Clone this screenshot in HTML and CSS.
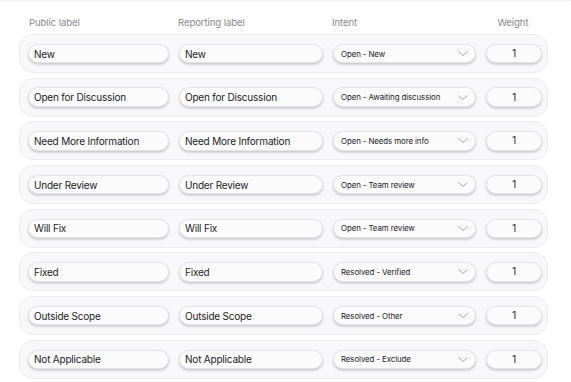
FILE: index.html
```html
<!DOCTYPE html>
<html lang="en">
<head>
    <meta charset="UTF-8">
    <meta name="viewport" content="width=device-width, initial-scale=1.0">
    <title>Status labels</title>
    <link rel="stylesheet" href="styles.css">
</head>
<body>
    <div class="topbar"></div>

    <div class="status-table">
        <div class="head-row">
            <span class="head-public">Public label</span>
            <span>Reporting label</span>
            <span>Intent</span>
            <span class="head-weight">Weight</span>
        </div>

        <div class="status-row">
            <div class="field">New</div>
            <div class="field">New</div>
            <div class="field select">Open - New<svg viewBox="0 0 10 5"><path d="M0.5 0.5L5 4.5L9.5 0.5"/></svg></div>
            <div class="field weight">1</div>
        </div>

        <div class="status-row">
            <div class="field">Open for Discussion</div>
            <div class="field">Open for Discussion</div>
            <div class="field select">Open - Awaiting discussion<svg viewBox="0 0 10 5"><path d="M0.5 0.5L5 4.5L9.5 0.5"/></svg></div>
            <div class="field weight">1</div>
        </div>

        <div class="status-row">
            <div class="field">Need More Information</div>
            <div class="field">Need More Information</div>
            <div class="field select">Open - Needs more info<svg viewBox="0 0 10 5"><path d="M0.5 0.5L5 4.5L9.5 0.5"/></svg></div>
            <div class="field weight">1</div>
        </div>

        <div class="status-row">
            <div class="field">Under Review</div>
            <div class="field">Under Review</div>
            <div class="field select">Open - Team review<svg viewBox="0 0 10 5"><path d="M0.5 0.5L5 4.5L9.5 0.5"/></svg></div>
            <div class="field weight">1</div>
        </div>

        <div class="status-row">
            <div class="field">Will Fix</div>
            <div class="field">Will Fix</div>
            <div class="field select">Open - Team review<svg viewBox="0 0 10 5"><path d="M0.5 0.5L5 4.5L9.5 0.5"/></svg></div>
            <div class="field weight">1</div>
        </div>

        <div class="status-row">
            <div class="field">Fixed</div>
            <div class="field">Fixed</div>
            <div class="field select">Resolved - Verified<svg viewBox="0 0 10 5"><path d="M0.5 0.5L5 4.5L9.5 0.5"/></svg></div>
            <div class="field weight">1</div>
        </div>

        <div class="status-row">
            <div class="field">Outside Scope</div>
            <div class="field">Outside Scope</div>
            <div class="field select">Resolved - Other<svg viewBox="0 0 10 5"><path d="M0.5 0.5L5 4.5L9.5 0.5"/></svg></div>
            <div class="field weight">1</div>
        </div>

        <div class="status-row">
            <div class="field">Not Applicable</div>
            <div class="field">Not Applicable</div>
            <div class="field select">Resolved - Exclude<svg viewBox="0 0 10 5"><path d="M0.5 0.5L5 4.5L9.5 0.5"/></svg></div>
            <div class="field weight">1</div>
        </div>
    </div>
</body>
</html>
```

FILE: styles.css
```css
* {
    margin: 0;
    padding: 0;
    box-sizing: border-box;
}

body {
    background: #fff;
    color: #232326;
    font-family: Inter, 'Noto Sans', sans-serif;
    overflow: hidden;
}

.topbar {
    height: 1px;
    background: #f2f2f2;
    box-shadow: 0 1px 4px rgba(0, 0, 0, 0.12);
}

.status-table {
    width: 529px;
    margin-left: 19px;
}

.head-row {
    display: grid;
    grid-template-columns: 141px 144px 143px 56px;
    column-gap: 10px;
    padding: 16px 7px 0 8px;
    height: 33px;
    font-size: 9.6px;
    letter-spacing: -0.1px;
    color: #8a8a8e;
}

.head-public {
    padding-left: 2px;
}

.head-weight {
    text-align: center;
}

.status-row {
    display: grid;
    grid-template-columns: 141px 144px 143px 56px;
    column-gap: 10px;
    align-items: center;
    height: 39px;
    margin-bottom: 4.7px;
    padding: 0 7px 0 8px;
    background: #f8f8fa;
    border: 1px solid #ececf0;
    border-radius: 14px;
}

.field {
    display: flex;
    align-items: center;
    height: 19.5px;
    padding: 0 5px;
    background: #fbfbfc;
    border: 1px solid #e4e4e9;
    border-radius: 10px;
    box-shadow: 0 1.5px 2.5px rgba(0, 0, 0, 0.2);
    font-size: 10px;
    letter-spacing: -0.2px;
    white-space: nowrap;
}

.select {
    justify-content: space-between;
    padding: 0 7px 0 7px;
    font-size: 7.9px;
    letter-spacing: -0.1px;
}

.select svg {
    width: 10px;
    height: 5px;
    fill: none;
    stroke: #a3a3b2;
    stroke-width: 1;
}

.weight {
    justify-content: center;
    font-size: 10.5px;
    color: #333;
}
```
